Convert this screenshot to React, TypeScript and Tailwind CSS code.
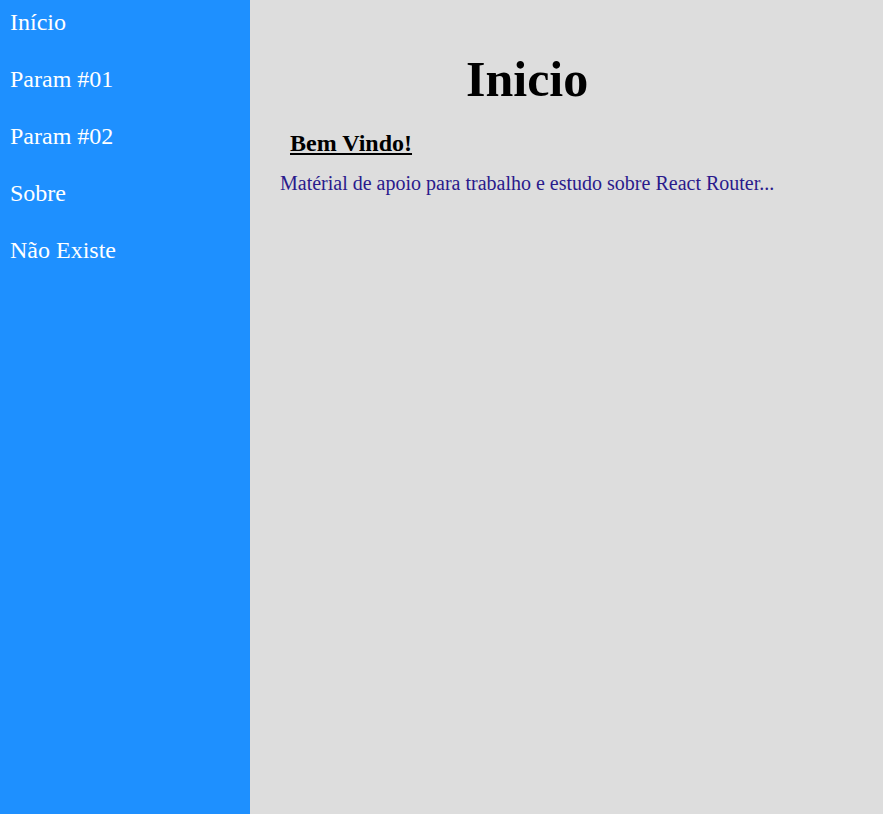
const links = ["Início", "Param #01", "Param #02", "Sobre", "Não Existe"];

export default function App() {
  return (
    <div className="flex min-h-[814px] font-['Liberation_Serif',serif]">
      {/* Sidebar */}
      <nav className="w-[250px] shrink-0 bg-[#1e90ff] pt-[8px]">
        <ul className="flex flex-col">
          {links.map((l) => (
            <li key={l} className="mb-[29px] pl-[10px] text-[24px] leading-[28px] text-white">
              <a href="#">{l}</a>
            </li>
          ))}
        </ul>
      </nav>

      {/* Main content */}
      <main className="flex-1 bg-[#dddddd] pl-[30px] pt-[51px]">
        <div className="w-fit">
          <h1 className="text-center text-[50px] font-bold leading-[57px] text-black">Inicio</h1>
          <h2 className="mt-[21px] pl-[10px] text-[24px] font-bold leading-[28px] text-black underline">
            Bem Vindo!
          </h2>
          <p className="mt-[15px] text-[20px] leading-[23px] text-[#2a1a8c]">
            Matérial de apoio para trabalho e estudo sobre React Router...
          </p>
        </div>
      </main>
    </div>
  );
}
